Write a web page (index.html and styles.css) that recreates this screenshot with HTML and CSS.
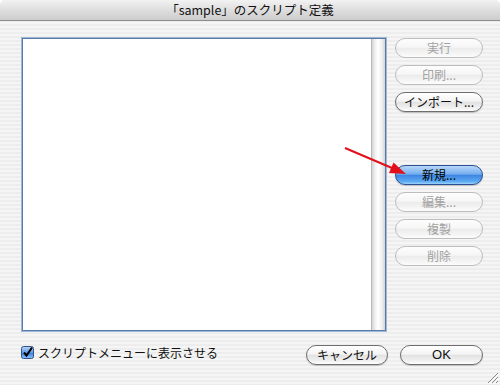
FILE: index.html
```html
<!DOCTYPE html>
<html lang="ja">
<head>
    <meta charset="UTF-8">
    <title>「sample」のスクリプト定義</title>
    <link rel="stylesheet" href="styles.css">
</head>
<body>
<div class="window">
    <div class="titlebar">「sample」のスクリプト定義</div>
    <div class="content">
        <div class="main">
            <div class="listbox">
                <div class="list"></div>
                <div class="track"></div>
            </div>
            <div class="buttons">
                <button class="btn disabled">実行</button>
                <button class="btn disabled">印刷...</button>
                <button class="btn">インポート...</button>
                <div class="spacer"></div>
                <button class="btn default">新規...</button>
                <button class="btn disabled">編集...</button>
                <button class="btn disabled">複製</button>
                <button class="btn disabled">削除</button>
            </div>
        </div>
        <div class="footer">
            <label class="check">
                <svg width="13" height="13" viewBox="0 0 13 13">
                    <defs>
                        <linearGradient id="cb" x1="0" y1="0" x2="0" y2="1">
                            <stop offset="0" stop-color="#b9d6f6"/>
                            <stop offset="0.5" stop-color="#5f9de6"/>
                            <stop offset="0.55" stop-color="#3c7fdc"/>
                            <stop offset="1" stop-color="#8cc6f7"/>
                        </linearGradient>
                    </defs>
                    <rect x="0.5" y="0.5" width="12" height="12" rx="2" fill="url(#cb)" stroke="#34528a"/>
                    <path d="M3 6.5 L5.5 9.5 L11 1.5" fill="none" stroke="#000" stroke-width="2"/>
                </svg>
                スクリプトメニューに表示させる
            </label>
            <div class="actions">
                <button class="btn cancel">キャンセル</button>
                <button class="btn ok">OK</button>
            </div>
        </div>
    </div>
    <svg class="arrow" width="500" height="385" viewBox="0 0 500 385">
        <line x1="345" y1="148" x2="392" y2="168" stroke="#e3101a" stroke-width="2"/>
        <polygon points="406,174 389,173 393.5,162.5" fill="#e3101a"/>
    </svg>
    <svg class="grip" width="14" height="14" viewBox="0 0 14 14">
        <path d="M13 3 L3 13 M13 7 L7 13 M13 11 L11 13" stroke="#8a8a8a" stroke-width="1"/>
        <path d="M14 4 L4 14 M14 8 L8 14" stroke="#fff" stroke-width="1"/>
    </svg>
</div>
</body>
</html>
```

FILE: styles.css
```css
body {
    margin: 0;
    background-color: #fff;
    font-family: "Noto Sans CJK JP", "Liberation Sans", sans-serif;
}

.window {
    position: relative;
    width: 500px;
    height: 385px;
    overflow: hidden;
    border-radius: 5px 5px 0 0;
    background: repeating-linear-gradient(#ededed 0, #ededed 2px, #f5f5f5 2px, #f5f5f5 4px);
}

.titlebar {
    height: 20px;
    line-height: 20px;
    text-align: center;
    font-size: 12.5px;
    color: #111;
    border-bottom: 1px solid #8c8c8c;
    background: linear-gradient(#f2f2f2, #dedede 50%, #cdcdcd);
}

.content {
    padding: 16px 17px 0 21px;
}

.main {
    display: flex;
    gap: 9px;
}

.listbox {
    display: flex;
    width: 362px;
    height: 291px;
    border: 1px solid #587ca9;
    box-shadow: 0 0 0 1px #9fb8d8;
    margin: 1px 0 0 1px;
    background-color: #fff;
}

.list {
    flex: 1;
}

.track {
    width: 13px;
    border-left: 1px solid #b9b9b9;
    background: linear-gradient(to right, #d4d4d4, #f6f6f6 30%, #ffffff 50%, #ececec 80%, #d2d2d2);
}

.buttons {
    display: flex;
    flex-direction: column;
    gap: 7px;
    width: 88px;
    padding-top: 1px;
}

.spacer {
    height: 39px;
}

.btn {
    height: 20px;
    padding: 0;
    border: 1px solid #6e6e6e;
    border-radius: 10px;
    background: linear-gradient(#ffffff, #f4f4f4 45%, #e2e2e2 52%, #f2f2f2 85%, #ffffff);
    box-shadow: 0 1px 1px rgba(0, 0, 0, 0.2);
    font-family: "Noto Sans CJK JP", "Liberation Sans", sans-serif;
    font-size: 12px;
    line-height: 18px;
    color: #111;
}

.btn.disabled {
    border-color: #bdbdbd;
    color: #a2a2a2;
    box-shadow: none;
    background: linear-gradient(#fdfdfd, #f6f6f6 45%, #ececec 52%, #f6f6f6 85%, #fdfdfd);
}

.btn.default {
    border-color: #2c4f95;
    background: linear-gradient(#b8d6f8, #74aeee 45%, #3f86e3 52%, #5aa8f2 85%, #9ad4fb);
    color: #000;
}

.footer {
    display: flex;
    justify-content: space-between;
    align-items: center;
    margin-top: 14px;
}

.check {
    display: flex;
    align-items: center;
    gap: 4px;
    font-size: 12px;
    color: #111;
    margin-top: -6px;
}

.actions {
    display: flex;
    gap: 12px;
}

.cancel {
    width: 82px;
}

.ok {
    width: 83px;
    font-family: "Liberation Sans", sans-serif;
    font-size: 13px;
}

.arrow {
    position: absolute;
    left: 0;
    top: 0;
    pointer-events: none;
}

.grip {
    position: absolute;
    right: 1px;
    bottom: 1px;
}
```
